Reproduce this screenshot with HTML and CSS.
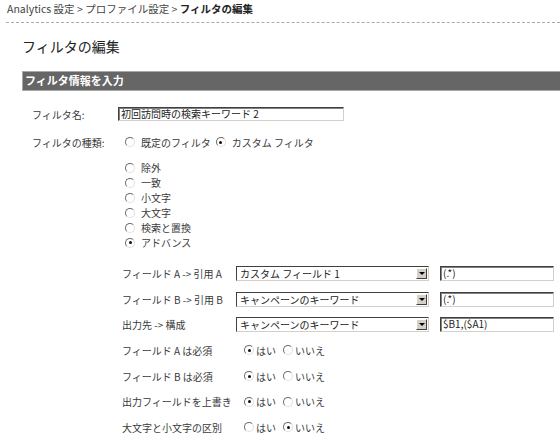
FILE: index.html
```html
<!DOCTYPE html>
<html lang="ja">
<head>
<meta charset="utf-8">
<link rel="stylesheet" href="styles.css">
</head>
<body>
<div class="crumbs">Analytics 設定 &gt; プロファイル設定 &gt; <b>フィルタの編集</b></div>
<h1 class="title">フィルタの編集</h1>
<div class="section">フィルタ情報を入力</div>
<div class="form">
  <div class="row r-name">
    <div class="lbl">フィルタ名:</div>
    <div class="input name-input">初回訪問時の検索キーワード 2</div>
  </div>
  <div class="row r-type">
    <div class="lbl">フィルタの種類:</div>
    <div class="opts">
      <span class="radio"></span><span class="opt">既定のフィルタ</span>
      <span class="radio on"></span><span class="opt">カスタム フィルタ</span>
    </div>
  </div>
  <div class="list">
    <div class="li"><span class="radio"></span><span>除外</span></div>
    <div class="li"><span class="radio"></span><span>一致</span></div>
    <div class="li"><span class="radio"></span><span>小文字</span></div>
    <div class="li"><span class="radio"></span><span>大文字</span></div>
    <div class="li"><span class="radio"></span><span>検索と置換</span></div>
    <div class="li"><span class="radio on"></span><span>アドバンス</span></div>
  </div>
  <div class="adv">
    <div class="frow">
      <div class="flbl">フィールド A -&gt; 引用 A</div>
      <div class="select"><span class="sv">カスタム フィールド 1</span><span class="arrow"></span></div>
      <div class="input tin">(.*)</div>
    </div>
    <div class="frow">
      <div class="flbl">フィールド B -&gt; 引用 B</div>
      <div class="select"><span class="sv">キャンペーンのキーワード</span><span class="arrow"></span></div>
      <div class="input tin">(.*)</div>
    </div>
    <div class="frow">
      <div class="flbl">出力先 -&gt; 構成</div>
      <div class="select"><span class="sv">キャンペーンのキーワード</span><span class="arrow"></span></div>
      <div class="input tin">$B1,($A1)</div>
    </div>
    <div class="yrow">
      <div class="flbl">フィールド A は必須</div>
      <div class="yn"><span class="radio on"></span><span class="ynt">はい</span><span class="radio"></span><span class="ynt">いいえ</span></div>
    </div>
    <div class="yrow">
      <div class="flbl">フィールド B は必須</div>
      <div class="yn"><span class="radio on"></span><span class="ynt">はい</span><span class="radio"></span><span class="ynt">いいえ</span></div>
    </div>
    <div class="yrow">
      <div class="flbl">出力フィールドを上書き</div>
      <div class="yn"><span class="radio on"></span><span class="ynt">はい</span><span class="radio"></span><span class="ynt">いいえ</span></div>
    </div>
    <div class="yrow">
      <div class="flbl">大文字と小文字の区別</div>
      <div class="yn"><span class="radio"></span><span class="ynt">はい</span><span class="radio on"></span><span class="ynt">いいえ</span></div>
    </div>
  </div>
</div>
</body>
</html>
```
FILE: styles.css
```css
html, body {
  margin: 0;
  padding: 0;
  background: #fff;
}
body {
  width: 560px;
  height: 442px;
  overflow: hidden;
  font-family: "Noto Sans CJK JP", "Liberation Sans", sans-serif;
  font-size: 10px;
  color: #3a3a3a;
}
.crumbs {
  margin-left: 6px;
  padding: 2px 0 0 1px;
  line-height: 14px;
  font-size: 10.5px;
  color: #444;
  border-bottom: 1px dashed #aaa;
  box-sizing: border-box;
  height: 23px;
}
.crumbs b {
  font-weight: bold;
  color: #222;
}
.title {
  margin: 0 0 0 22px;
  padding-top: 14px;
  height: 48px;
  box-sizing: border-box;
  font-size: 14px;
  font-weight: normal;
  line-height: 18px;
  color: #222;
}
.section {
  margin-left: 22px;
  height: 20px;
  box-sizing: border-box;
  background: #666;
  border: 1px solid #a8a8a8;
  border-right: none;
  color: #fff;
  font-weight: bold;
  font-size: 11px;
  line-height: 17px;
  padding-left: 2px;
}
.form {
  padding-left: 32px;
  padding-top: 16px;
}
.row {
  display: flex;
  align-items: center;
}
.lbl {
  width: 86px;
  flex: none;
}
.r-name {
  height: 14px;
}
.input {
  box-sizing: border-box;
  height: 14px;
  border-top: 1px solid #404040;
  border-left: 1px solid #404040;
  border-right: 1px solid #d4d0c8;
  border-bottom: 1px solid #d4d0c8;
  box-shadow: inset 1px 1px 0 #808080;
  background: #fff;
  line-height: 12px;
  padding-left: 2px;
  color: #222;
  white-space: nowrap;
  overflow: hidden;
}
.name-input {
  width: 226px;
}
.r-type {
  margin-top: 14px;
  height: 14px;
}
.opts {
  display: flex;
  align-items: center;
  padding-left: 7px;
}
.opt {
  margin-left: 6px;
  margin-right: 5px;
}
.radio {
  display: inline-block;
  flex: none;
  width: 10px;
  height: 10px;
  border-radius: 50%;
  box-sizing: border-box;
  border: 1px solid;
  border-color: #6a6a6a #e0e0e0 #e0e0e0 #6a6a6a;
  background: #fff;
  position: relative;
}
.radio.on::after {
  content: "";
  position: absolute;
  left: 2.5px;
  top: 2.5px;
  width: 3px;
  height: 3px;
  border-radius: 50%;
  background: #111;
}
.list {
  padding-left: 93px;
  padding-top: 11px;
}
.li {
  display: flex;
  align-items: center;
  height: 15px;
}
.li .radio {
  margin-right: 6px;
}
.adv {
  padding-left: 90px;
  padding-top: 11px;
}
.frow {
  display: flex;
  align-items: center;
  height: 25.5px;
}
.flbl {
  width: 114px;
  flex: none;
  white-space: nowrap;
}
.select {
  box-sizing: border-box;
  width: 193px;
  height: 15px;
  border-top: 1px solid #404040;
  border-left: 1px solid #404040;
  border-right: 1px solid #d4d0c8;
  border-bottom: 1px solid #d4d0c8;
  display: flex;
  align-items: center;
  background: #fff;
}
.sv {
  flex: 1;
  padding-left: 3px;
  line-height: 13px;
  color: #222;
}
.arrow {
  width: 11px;
  height: 11px;
  margin-right: 1px;
  box-sizing: border-box;
  background: #d4d0c8;
  border: 1px solid;
  border-color: #fff #404040 #404040 #fff;
  position: relative;
}
.arrow::after {
  content: "";
  position: absolute;
  left: 2px;
  top: 3px;
  border-left: 3px solid transparent;
  border-right: 3px solid transparent;
  border-top: 3px solid #000;
}
.tin {
  margin-left: 11px;
  width: 114px;
  height: 15px;
}
.yrow {
  display: flex;
  align-items: center;
  height: 25.7px;
}
.yn {
  display: flex;
  align-items: center;
  padding-left: 8px;
}
.ynt {
  margin-left: 2px;
  margin-right: 7px;
}
```
